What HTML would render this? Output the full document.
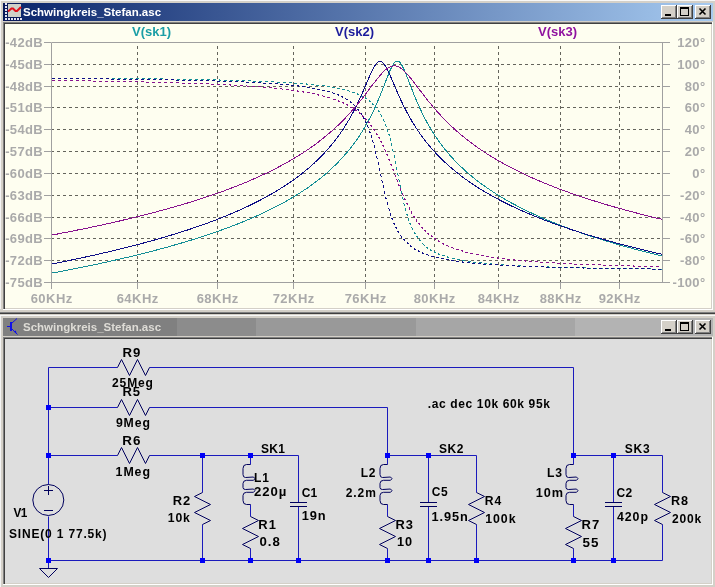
<!DOCTYPE html>
<html><head><meta charset="utf-8"><style>
html,body{margin:0;padding:0;width:715px;height:587px;overflow:hidden;background:#d4d0c8}
svg{display:block}
text{font-family:"Liberation Sans",sans-serif}
.ttl{font-size:11.5px;font-weight:bold}
.ax{font-size:13px;font-weight:bold;fill:#aaaaaa;letter-spacing:0.35px}
.tl{font-size:13px;font-weight:bold}
.sc{font-size:12px;font-weight:bold;fill:#000}
</style></head><body>
<svg width="715" height="587" viewBox="0 0 715 587" style="will-change:transform">
<defs>
<linearGradient id="ga" x1="0" x2="1" y1="0" y2="0"><stop offset="0" stop-color="#0a246a"/><stop offset="1" stop-color="#a6caf0"/></linearGradient>
<linearGradient id="gi" x1="0" x2="1" y1="0" y2="0"><stop offset="0" stop-color="#808080"/><stop offset="1" stop-color="#c0c0c0"/></linearGradient>
<clipPath id="cp"><rect x="51" y="42" width="612" height="241"/></clipPath>
</defs>
<rect x="0" y="0" width="715" height="1" fill="#f8f8f8" />
<rect x="0" y="1" width="1" height="308" fill="#f4f4f4" />
<rect x="3" y="3" width="710" height="18" fill="url(#ga)" />
<text x="23" y="16" class="ttl" fill="#ffffff">Schwingkreis_Stefan.asc</text>
<rect x="3" y="3" width="18" height="18" fill="#0a1a5a"/><rect x="8" y="4" width="13" height="13" fill="#cfd0c8"/><rect x="5" y="3" width="2" height="1" fill="#dde0f0"/><rect x="5" y="3" width="2" height="2" fill="#e4e4f4"/><rect x="5" y="6" width="2" height="2" fill="#e4e4f4"/><rect x="5" y="9" width="2" height="2" fill="#e4e4f4"/><rect x="5" y="12" width="2" height="2" fill="#e4e4f4"/><rect x="5" y="15" width="2" height="2" fill="#e4e4f4"/><rect x="5" y="18" width="2" height="2" fill="#e4e4f4"/><rect x="8" y="18" width="2" height="2" fill="#e4e4f4"/><rect x="11" y="18" width="2" height="2" fill="#e4e4f4"/><rect x="14" y="18" width="2" height="2" fill="#e4e4f4"/><rect x="17" y="18" width="2" height="2" fill="#e4e4f4"/><rect x="20" y="18" width="2" height="2" fill="#e4e4f4"/><path d="M8 11.5L11.5 8.5L13 8.5L15.5 11L17 11L21 7" stroke="#e0101c" stroke-width="2" fill="none"/>
<rect x="661" y="5" width="16" height="14" fill="#404040" />
<rect x="661" y="5" width="15" height="13" fill="#ffffff" />
<rect x="662" y="6" width="14" height="12" fill="#808080" />
<rect x="662" y="6" width="13" height="11" fill="#d4d0c8" />
<rect x="665" y="14" width="6" height="2" fill="#000" />
<rect x="677" y="5" width="16" height="14" fill="#404040" />
<rect x="677" y="5" width="15" height="13" fill="#ffffff" />
<rect x="678" y="6" width="14" height="12" fill="#808080" />
<rect x="678" y="6" width="13" height="11" fill="#d4d0c8" />
<rect x="680" y="7" width="9" height="9" fill="#000" />
<rect x="681" y="9" width="7" height="6" fill="#d4d0c8" />
<rect x="695" y="5" width="16" height="14" fill="#404040" />
<rect x="695" y="5" width="15" height="13" fill="#ffffff" />
<rect x="696" y="6" width="14" height="12" fill="#808080" />
<rect x="696" y="6" width="13" height="11" fill="#d4d0c8" />
<path d="M699.5 8.5L705.5 14.5M705.5 8.5L699.5 14.5" stroke="#000" stroke-width="1.6"/>
<rect x="3" y="22" width="710" height="1" fill="#808080" />
<rect x="3" y="22" width="1" height="288" fill="#808080" />
<rect x="4" y="23" width="708" height="1" fill="#404040" />
<rect x="4" y="23" width="1" height="286" fill="#404040" />
<rect x="3" y="309" width="710" height="1" fill="#ffffff" />
<rect x="712" y="22" width="1" height="288" fill="#ffffff" />
<rect x="5" y="24" width="706" height="284" fill="#fefef0" />
<rect x="0" y="312" width="715" height="1" fill="#808080" />
<rect x="0" y="313" width="715" height="1" fill="#404040" />
<rect x="0" y="315" width="715" height="1" fill="#f8f8f8" />
<rect x="0" y="316" width="1" height="308" fill="#f4f4f4" />
<rect x="3" y="318" width="174" height="18" fill="#808080" />
<rect x="177" y="318" width="79" height="18" fill="#8c8c8c" />
<rect x="256" y="318" width="160" height="18" fill="#999999" />
<rect x="416" y="318" width="159" height="18" fill="#a6a6a6" />
<rect x="575" y="318" width="138" height="18" fill="#b3b3b3" />
<text x="23" y="331" class="ttl" fill="#dedcd6">Schwingkreis_Stefan.asc</text>
<rect x="10" y="322" width="2" height="9" fill="#1010e8"/><path d="M7 326.5H10M12 323L17 318.5M12 329L17.5 334.5" stroke="#1010e8" stroke-width="1" fill="none"/><path d="M13.5 331.5L16.5 333.8L16 330.5Z" fill="#1010e8"/>
<rect x="661" y="320" width="16" height="14" fill="#404040" />
<rect x="661" y="320" width="15" height="13" fill="#ffffff" />
<rect x="662" y="321" width="14" height="12" fill="#808080" />
<rect x="662" y="321" width="13" height="11" fill="#d4d0c8" />
<rect x="665" y="329" width="6" height="2" fill="#000" />
<rect x="677" y="320" width="16" height="14" fill="#404040" />
<rect x="677" y="320" width="15" height="13" fill="#ffffff" />
<rect x="678" y="321" width="14" height="12" fill="#808080" />
<rect x="678" y="321" width="13" height="11" fill="#d4d0c8" />
<rect x="680" y="322" width="9" height="9" fill="#000" />
<rect x="681" y="324" width="7" height="6" fill="#d4d0c8" />
<rect x="695" y="320" width="16" height="14" fill="#404040" />
<rect x="695" y="320" width="15" height="13" fill="#ffffff" />
<rect x="696" y="321" width="14" height="12" fill="#808080" />
<rect x="696" y="321" width="13" height="11" fill="#d4d0c8" />
<path d="M699.5 323.5L705.5 329.5M705.5 323.5L699.5 329.5" stroke="#000" stroke-width="1.6"/>
<rect x="3" y="337" width="710" height="1" fill="#808080" />
<rect x="3" y="337" width="1" height="248" fill="#808080" />
<rect x="4" y="338" width="708" height="1" fill="#404040" />
<rect x="4" y="338" width="1" height="246" fill="#404040" />
<rect x="3" y="584" width="710" height="1" fill="#ffffff" />
<rect x="712" y="337" width="1" height="248" fill="#ffffff" />
<rect x="5" y="339" width="706" height="244" fill="#dedede" />
<g shape-rendering="crispEdges"><line x1="51" y1="64.5" x2="662" y2="64.5" stroke="#64645c" stroke-dasharray="3 3"/>
<line x1="51" y1="86.5" x2="662" y2="86.5" stroke="#64645c" stroke-dasharray="3 3"/>
<line x1="51" y1="107.5" x2="662" y2="107.5" stroke="#64645c" stroke-dasharray="3 3"/>
<line x1="51" y1="129.5" x2="662" y2="129.5" stroke="#64645c" stroke-dasharray="3 3"/>
<line x1="51" y1="151.5" x2="662" y2="151.5" stroke="#64645c" stroke-dasharray="3 3"/>
<line x1="51" y1="173.5" x2="662" y2="173.5" stroke="#64645c" stroke-dasharray="3 3"/>
<line x1="51" y1="195.5" x2="662" y2="195.5" stroke="#64645c" stroke-dasharray="3 3"/>
<line x1="51" y1="217.5" x2="662" y2="217.5" stroke="#64645c" stroke-dasharray="3 3"/>
<line x1="51" y1="238.5" x2="662" y2="238.5" stroke="#64645c" stroke-dasharray="3 3"/>
<line x1="51" y1="260.5" x2="662" y2="260.5" stroke="#64645c" stroke-dasharray="3 3"/>
<line x1="137.5" y1="42" x2="137.5" y2="282" stroke="#64645c" stroke-dasharray="3 3" stroke-dashoffset="2"/>
<line x1="217.5" y1="42" x2="217.5" y2="282" stroke="#64645c" stroke-dasharray="3 3" stroke-dashoffset="2"/>
<line x1="293.5" y1="42" x2="293.5" y2="282" stroke="#64645c" stroke-dasharray="3 3" stroke-dashoffset="2"/>
<line x1="365.5" y1="42" x2="365.5" y2="282" stroke="#64645c" stroke-dasharray="3 3" stroke-dashoffset="2"/>
<line x1="434.5" y1="42" x2="434.5" y2="282" stroke="#64645c" stroke-dasharray="3 3" stroke-dashoffset="2"/>
<line x1="498.5" y1="42" x2="498.5" y2="282" stroke="#64645c" stroke-dasharray="3 3" stroke-dashoffset="2"/>
<line x1="560.5" y1="42" x2="560.5" y2="282" stroke="#64645c" stroke-dasharray="3 3" stroke-dashoffset="2"/>
<line x1="619.5" y1="42" x2="619.5" y2="282" stroke="#64645c" stroke-dasharray="3 3" stroke-dashoffset="2"/></g>
<g clip-path="url(#cp)" shape-rendering="crispEdges"><polyline points="51,273.3 51.9,273.1 52.7,272.9 53.2,272.9 54.1,272.7 54.9,272.5 55.4,272.5 56.2,272.3 56.7,272.2 57.6,272 58.4,271.9 58.9,271.8 59.7,271.6 60.2,271.5 61,271.4 61.5,271.3 62.4,271.1 63.2,271 63.7,270.9 64.5,270.7 65,270.6 65.8,270.5 66.3,270.4 67.2,270.2 68,270 68.5,269.9 69.3,269.8 69.8,269.7 70.7,269.5 71.5,269.3 72,269.3 72.8,269.1 73.3,269 74.1,268.8 74.6,268.7 75.5,268.6 76.3,268.4 76.8,268.3 77.6,268.1 78.1,268 79,267.9 79.8,267.7 80.3,267.6 81.1,267.4 81.6,267.3 82.4,267.1 82.9,267.1 83.8,266.9 84.6,266.7 85.1,266.6 85.9,266.4 86.4,266.3 87.2,266.2 87.7,266.1 88.6,265.9 89.4,265.7 89.9,265.6 90.7,265.4 91.2,265.3 92.1,265.2 92.9,265 93.4,264.9 94.2,264.7 94.7,264.6 95.5,264.4 96,264.3 96.9,264.1 97.7,264 98.2,263.9 99,263.7 99.5,263.6 100.4,263.4 101.2,263.2 101.7,263.1 102.5,262.9 103,262.8 103.8,262.6 104.3,262.5 105.2,262.3 106,262.2 106.5,262.1 107.3,261.9 107.8,261.8 108.6,261.6 109.1,261.5 110,261.3 110.8,261.1 111.3,261 112.1,260.8 112.6,260.7 113.5,260.5 114.3,260.3 114.8,260.2 115.6,260 116.1,259.9 116.9,259.7 117.4,259.6 118.3,259.4 119.1,259.2 119.6,259.1 120.4,258.9 120.9,258.8 121.8,258.6 122.6,258.4 123.1,258.3 123.9,258.1 124.4,258 125.2,257.8 125.7,257.7 126.6,257.5 127.4,257.3 127.9,257.2 128.7,257 129.2,256.9 130.1,256.6 130.9,256.4 131.4,256.3 132.2,256.1 132.7,256 133.5,255.8 134,255.7 134.9,255.5 135.7,255.3 136.2,255.2 137,255 137.5,254.8 138.3,254.6 138.8,254.5 139.7,254.3 140.5,254.1 141,254 141.8,253.8 142.3,253.7 143.2,253.4 144,253.2 144.5,253.1 145.3,252.9 145.8,252.8 146.6,252.6 147.1,252.4 148,252.2 148.8,252 149.3,251.9 150.1,251.7 150.6,251.5 151.5,251.3 152.3,251.1 152.8,251 153.6,250.7 154.1,250.6 154.9,250.4 155.4,250.3 156.3,250.1 157.1,249.8 157.6,249.7 158.4,249.5 158.9,249.4 159.7,249.1 160.2,249 161.1,248.8 161.9,248.5 162.4,248.4 163.2,248.2 163.7,248.1 164.6,247.8 165.4,247.6 165.9,247.5 166.7,247.2 167.2,247.1 168,246.9 168.5,246.7 169.4,246.5 170.2,246.3 170.7,246.1 171.5,245.9 172,245.8 172.9,245.5 173.7,245.3 174.2,245.1 175,244.9 175.5,244.8 176.3,244.5 176.8,244.4 177.7,244.1 178.5,243.9 179,243.8 179.8,243.5 180.3,243.4 181.1,243.1 181.6,243 182.5,242.7 183.3,242.5 183.8,242.3 184.6,242.1 185.1,242 186,241.7 186.8,241.4 187.3,241.3 188.1,241 188.6,240.9 189.4,240.6 189.9,240.5 190.8,240.2 191.6,240 192.1,239.8 192.9,239.6 193.4,239.4 194.3,239.2 195.1,238.9 195.6,238.7 196.4,238.5 196.9,238.3 197.7,238.1 198.2,237.9 199.1,237.6 199.9,237.4 200.4,237.2 201.2,236.9 201.7,236.8 202.5,236.5 203,236.4 203.9,236.1 204.7,235.8 205.2,235.6 206,235.4 206.5,235.2 207.4,234.9 208.2,234.6 208.7,234.5 209.5,234.2 210,234 210.8,233.7 211.3,233.6 212.2,233.3 213,233 213.5,232.9 214.3,232.6 214.8,232.4 215.7,232.1 216.5,231.8 217,231.6 217.8,231.3 218.3,231.2 219.1,230.9 219.6,230.7 220.5,230.4 221.3,230.1 221.8,229.9 222.6,229.6 223.1,229.5 223.9,229.1 224.4,229 225.3,228.7 226.1,228.3 226.6,228.2 227.4,227.9 227.9,227.7 228.8,227.4 229.6,227 230.1,226.9 230.9,226.5 231.4,226.4 232.2,226 232.7,225.9 233.6,225.5 234.4,225.2 234.9,225 235.7,224.7 236.2,224.5 237.1,224.2 237.9,223.8 238.4,223.7 239.2,223.3 239.7,223.1 240.5,222.8 241,222.6 241.9,222.3 242.7,221.9 243.2,221.7 244,221.4 244.5,221.2 245.3,220.8 245.8,220.6 246.7,220.3 247.5,219.9 248,219.7 248.8,219.4 249.3,219.2 250.2,218.8 251,218.4 251.5,218.2 252.3,217.9 252.8,217.7 253.6,217.3 254.1,217.1 255,216.7 255.8,216.3 256.3,216.1 257.1,215.7 257.6,215.5 258.5,215.1 259.3,214.7 259.8,214.5 260.6,214.1 261.1,213.9 261.9,213.5 262.4,213.3 263.3,212.9 264.1,212.5 264.6,212.3 265.4,211.9 265.9,211.7 266.7,211.3 267.2,211.1 268.1,210.6 268.9,210.2 269.4,210 270.2,209.6 270.7,209.3 271.6,208.9 272.4,208.5 272.9,208.2 273.7,207.8 274.2,207.6 275,207.1 275.5,206.9 276.4,206.5 277.2,206 277.7,205.8 278.5,205.3 279,205.1 279.9,204.6 280.7,204.2 281.2,203.9 282,203.4 282.5,203.2 283.3,202.7 283.8,202.5 284.7,202 285.5,201.5 286,201.3 286.8,200.8 287.3,200.5 288.2,200 289,199.5 289.5,199.3 290.3,198.8 290.8,198.5 291.6,198 292.1,197.7 293,197.2 293.8,196.7 294.3,196.4 295.1,195.9 295.6,195.6 296.4,195.1 296.9,194.8 297.8,194.3 298.6,193.7 299.1,193.5 299.9,192.9 300.4,192.6 301.3,192 302.1,191.5 302.6,191.2 303.4,190.6 303.9,190.3 304.7,189.7 305.2,189.4 306.1,188.9 306.9,188.3 307.4,188 308.2,187.3 308.7,187 309.6,186.4 310.4,185.8 310.9,185.5 311.7,184.9 312.2,184.5 313,183.9 313.5,183.6 314.4,182.9 315.2,182.3 315.7,182 316.5,181.3 317,180.9 317.8,180.3 318.3,179.9 319.2,179.2 320,178.6 320.5,178.2 321.3,177.5 321.8,177.1 322.7,176.4 323.5,175.7 324,175.3 324.8,174.6 325.3,174.2 326.1,173.5 326.6,173.1 327.5,172.3 328.3,171.6 328.8,171.2 329.6,170.4 330.1,170 331,169.2 331.8,168.4 332.3,168 333.1,167.1 333.6,166.7 334.4,165.9 334.9,165.5 335.3,165 335.8,164.6 336.6,163.7 337.1,163.3 337.5,162.8 338.4,162 338.8,161.5 339.2,161 339.7,160.6 340.1,160.1 340.6,159.7 341,159.2 341.4,158.7 341.9,158.3 342.3,157.8 342.7,157.3 343.2,156.8 343.6,156.3 344.1,155.8 344.5,155.3 344.9,154.8 345.4,154.3 345.8,153.8 346.2,153.3 346.7,152.8 347.1,152.3 347.5,151.8 348,151.2 348.4,150.7 348.9,150.2 349.3,149.6 349.7,149.1 350.2,148.5 350.6,148 351,147.4 351.5,146.9 351.9,146.3 352.4,145.7 352.8,145.2 353.2,144.6 353.7,144 354.1,143.4 354.5,142.8 355,142.2 355.4,141.6 355.8,141 356.3,140.4 356.7,139.8 357.2,139.1 357.6,138.5 358,137.9 358.5,137.2 358.9,136.6 359.3,135.9 359.8,135.2 360.2,134.6 360.6,133.9 361.1,133.2 361.5,132.5 362,131.8 362.4,131.1 362.8,130.4 363.3,129.7 363.7,129 364.1,128.3 364.6,127.5 365,126.8 365.5,126 365.9,125.3 366.3,124.5 366.8,123.7 367.2,122.9 367.6,122.1 368.1,121.3 368.5,120.5 368.9,119.7 369.4,118.9 369.8,118 370.3,117.2 370.7,116.3 371.1,115.5 371.6,114.6 372,113.7 372.4,112.8 372.9,111.9 373.3,111 373.8,110.1 374.2,109.2 374.6,108.2 375.1,107.3 375.5,106.3 375.9,105.3 376.4,104.4 376.8,103.4 377.2,102.4 377.7,101.4 378.1,100.3 378.6,99.3 379,98.3 379.4,97.2 379.9,96.2 380.3,95.1 380.7,94 381.2,92.9 381.6,91.8 382,90.7 382.5,89.6 382.9,88.5 383.4,87.4 383.8,86.2 384.2,85.1 384.7,84 385.1,82.9 385.5,81.7 386,80.6 386.4,79.5 386.9,78.3 387.3,77.2 387.7,76.1 388.2,75 388.6,73.9 389,72.9 389.5,71.8 389.9,70.8 390.3,69.8 390.8,68.9 391.2,68 391.7,67.1 392.1,66.2 392.5,65.4 393,64.7 393.4,64 393.8,63.4 394.3,62.8 395.2,61.9 396,61.3 396.5,61.1 397.3,61 397.8,61.1 398.6,61.4 399.1,61.7 400,62.5 400.4,63 400.8,63.6 401.3,64.3 401.7,65 402.1,65.7 402.6,66.5 403,67.4 403.4,68.3 403.9,69.2 404.3,70.2 404.8,71.2 405.2,72.2 405.6,73.3 406.1,74.3 406.5,75.4 406.9,76.5 407.4,77.6 407.8,78.7 408.3,79.9 408.7,81 409.1,82.1 409.6,83.3 410,84.4 410.4,85.5 410.9,86.7 411.3,87.8 411.7,88.9 412.2,90 412.6,91.1 413.1,92.2 413.5,93.3 413.9,94.4 414.4,95.5 414.8,96.5 415.2,97.6 415.7,98.6 416.1,99.7 416.6,100.7 417,101.7 417.4,102.7 417.9,103.7 418.3,104.7 418.7,105.7 419.2,106.7 419.6,107.6 420,108.6 420.5,109.5 420.9,110.4 421.4,111.4 421.8,112.3 422.2,113.2 422.7,114 423.1,114.9 423.5,115.8 424,116.7 424.4,117.5 424.8,118.3 425.3,119.2 425.7,120 426.2,120.8 426.6,121.6 427,122.4 427.5,123.2 427.9,124 428.3,124.8 428.8,125.5 429.2,126.3 429.7,127 430.1,127.8 430.5,128.5 431,129.3 431.4,130 431.8,130.7 432.3,131.4 432.7,132.1 433.1,132.8 433.6,133.5 434,134.2 434.5,134.8 434.9,135.5 435.3,136.2 435.8,136.8 436.2,137.5 436.6,138.1 437.1,138.7 437.5,139.4 438,140 438.4,140.6 438.8,141.2 439.3,141.8 439.7,142.4 440.1,143 440.6,143.6 441,144.2 441.4,144.8 441.9,145.4 442.3,146 442.8,146.5 443.2,147.1 443.6,147.6 444.1,148.2 444.5,148.7 444.9,149.3 445.4,149.8 445.8,150.4 446.3,150.9 446.7,151.4 447.1,152 447.6,152.5 448,153 448.4,153.5 448.9,154 449.3,154.5 449.7,155 450.2,155.5 450.6,156 451.1,156.5 451.5,157 451.9,157.5 452.4,157.9 452.8,158.4 453.2,158.9 453.7,159.4 454.5,160.3 455,160.8 455.9,161.7 456.7,162.6 457.2,163 458,163.9 458.5,164.3 458.9,164.8 459.4,165.2 460.2,166 460.7,166.5 461.5,167.3 462,167.7 462.8,168.5 463.3,168.9 464.2,169.7 465,170.5 465.5,170.9 466.3,171.7 466.8,172.1 467.7,172.9 468.5,173.6 469,174 469.8,174.7 470.3,175.1 471.1,175.8 471.6,176.2 472.5,176.9 473.3,177.6 473.8,178 474.6,178.7 475.1,179 475.9,179.7 476.4,180.1 477.3,180.7 478.1,181.4 478.6,181.7 479.4,182.4 479.9,182.7 480.8,183.4 481.6,184 482.1,184.3 482.9,185 483.4,185.3 484.2,185.9 484.7,186.2 485.6,186.8 486.4,187.5 486.9,187.8 487.7,188.4 488.2,188.7 489.1,189.3 489.9,189.8 490.4,190.1 491.2,190.7 491.7,191 492.5,191.6 493,191.9 493.9,192.4 494.7,193 495.2,193.3 496,193.8 496.5,194.1 497.3,194.7 497.8,194.9 498.7,195.5 499.5,196 500,196.3 500.8,196.8 501.3,197.1 502.2,197.6 503,198.1 503.5,198.4 504.3,198.9 504.8,199.1 505.6,199.6 506.1,199.9 507,200.4 507.8,200.9 508.3,201.1 509.1,201.6 509.6,201.9 510.5,202.3 511.3,202.8 511.8,203.1 512.6,203.5 513.1,203.8 513.9,204.2 514.4,204.5 515.3,204.9 516.1,205.4 516.6,205.6 517.4,206.1 517.9,206.3 518.7,206.8 519.2,207 520.1,207.4 520.9,207.9 521.4,208.1 522.2,208.5 522.7,208.8 523.6,209.2 524.4,209.6 524.9,209.9 525.7,210.3 526.2,210.5 527,210.9 527.5,211.1 528.4,211.5 529.2,212 529.7,212.2 530.5,212.6 531,212.8 531.9,213.2 532.7,213.6 533.2,213.8 534,214.2 534.5,214.4 535.3,214.8 535.8,215 536.7,215.4 537.5,215.8 538,216 538.8,216.4 539.3,216.6 540.1,217 540.6,217.2 541.5,217.5 542.3,217.9 542.8,218.1 543.6,218.5 544.1,218.7 545,219 545.8,219.4 546.3,219.6 547.1,220 547.6,220.2 548.4,220.5 548.9,220.7 549.8,221.1 550.6,221.4 551.1,221.6 551.9,222 552.4,222.1 553.3,222.5 554.1,222.8 554.6,223 555.4,223.4 555.9,223.5 556.7,223.9 557.2,224.1 558.1,224.4 558.9,224.8 559.4,224.9 560.2,225.3 560.7,225.4 561.5,225.8 562,225.9 562.9,226.3 563.7,226.6 564.2,226.8 565,227.1 565.5,227.3 566.4,227.6 567.2,227.9 567.7,228.1 568.5,228.4 569,228.6 569.8,228.9 570.3,229 571.2,229.4 572,229.7 572.5,229.8 573.3,230.1 573.8,230.3 574.7,230.6 575.5,230.9 576,231.1 576.8,231.4 577.3,231.5 578.1,231.8 578.6,232 579.5,232.3 580.3,232.6 580.8,232.8 581.6,233.1 582.1,233.2 582.9,233.5 583.4,233.7 584.3,234 585.1,234.2 585.6,234.4 586.4,234.7 586.9,234.8 587.8,235.1 588.6,235.4 589.1,235.6 589.9,235.8 590.4,236 591.2,236.3 591.7,236.4 592.6,236.7 593.4,237 593.9,237.1 594.7,237.4 595.2,237.5 596.1,237.8 596.9,238.1 597.4,238.2 598.2,238.5 598.7,238.7 599.5,238.9 600,239.1 600.9,239.3 601.7,239.6 602.2,239.7 603,240 603.5,240.2 604.4,240.4 605.2,240.7 605.7,240.8 606.5,241.1 607,241.2 607.8,241.5 608.3,241.6 609.2,241.9 610,242.1 610.5,242.3 611.3,242.5 611.8,242.7 612.6,242.9 613.1,243 614,243.3 614.8,243.6 615.3,243.7 616.1,243.9 616.6,244.1 617.5,244.3 618.3,244.6 618.8,244.7 619.6,244.9 620.1,245.1 620.9,245.3 621.4,245.4 622.3,245.7 623.1,245.9 623.6,246.1 624.4,246.3 624.9,246.4 625.8,246.7 626.6,246.9 627.1,247 627.9,247.3 628.4,247.4 629.2,247.6 629.7,247.8 630.6,248 631.4,248.2 631.9,248.3 632.7,248.6 633.2,248.7 634,248.9 634.5,249.1 635.4,249.3 636.2,249.5 636.7,249.6 637.5,249.9 638,250 638.9,250.2 639.7,250.4 640.2,250.6 641,250.8 641.5,250.9 642.3,251.1 642.8,251.2 643.7,251.5 644.5,251.7 645,251.8 645.8,252 646.3,252.1 647.2,252.4 648,252.6 648.5,252.7 649.3,252.9 649.8,253 650.6,253.3 651.1,253.4 652,253.6 652.8,253.8 653.3,253.9 654.1,254.1 654.6,254.2 655.4,254.5 655.9,254.6 656.8,254.8 657.6,255 658.1,255.1 658.9,255.3 659.4,255.4 660.3,255.6 661.1,255.8 661.6,255.9" stroke="#138e96" fill="none" stroke-width="1"/>
<path d="M52 78h3M58 78h3M64 78h3M70 78h3M76 78h3M82 78h3M88 78h3M94 78h3M100 78h3M106 78h3M112 78h3M118 78h3M124 78h3M130 78h3M136 78h3M142 78h3M148 78h3M154 78h3M160 78h3M165 79h3M171 79h3M177 79h3M183 79h3M189 79h3M195 79h3M201 79h3M207 79h3M213 79h3M219 79h1M219 80h2M224 80h3M230 80h3M236 80h3M242 80h3M248 80h3M253 81h3M259 81h3M265 81h3M271 81h3M277 82h3M283 82h3M289 82h3M294 83h3M300 83h3M306 83h1M306 84h2M311 84h3M316 85h3M322 85h3M327 86h3M332 87h3M337 88h3M342 89h3M347 90h2M349 91h1M352 92h3M357 93h1M357 94h2M361 95h1M361 96h2M365 97h1M365 98h2M369 100h1M369 101h2M372 103h1M372 104h2M375 106h1M375 107h2M378 110h1M378 111h2M380 114h1M381 115h1M381 116h1M383 119h1M383 120h1M384 121h1M385 124h1M385 125h1M386 126h1M387 129h1M387 130h1M387 131h1M388 134h2M389 135h1M390 138h1M390 139h1M390 140h1M391 143h1M391 144h1M391 145h1M392 149h1M392 150h1M393 151h1M394 155h1M394 156h1M394 157h1M395 161h1M395 162h1M395 163h1M396 167h1M396 168h1M396 169h1M397 173h1M397 174h1M398 175h1M398 179h1M399 180h1M399 181h1M400 185h1M400 186h1M400 187h1M401 191h1M401 192h1M401 193h1M402 197h1M402 198h1M403 199h1M403 203h1M404 204h1M404 205h1M405 208h1M405 209h1M405 210h1M406 214h2M407 215h1M408 218h1M408 219h1M408 220h1M409 223h2M410 224h1M411 227h1M412 228h1M412 229h1M414 232h1M414 233h2M416 236h2M417 237h1M419 239h1M419 240h2M422 243h1M423 244h1M424 245h1M426 247h2M427 248h1M430 249h1M430 250h2M434 251h1M434 252h2M438 253h1M438 254h2M442 255h3M447 256h1M447 257h2M452 258h3M457 259h3M462 260h3M468 261h3M473 262h3M479 262h3M484 263h3M490 263h2M491 264h1M495 264h3M501 264h3M506 265h3M512 265h3M518 265h3M523 266h3M529 266h3M535 266h3M541 266h3M547 266h2M549 267h1M553 267h3M559 267h3M565 267h3M571 267h3M577 267h3M583 267h3M588 268h3M594 268h3M600 268h3M606 268h3M612 268h3M618 268h3M624 268h3M630 268h3M636 268h3M642 268h3M648 268h3M653 269h3M659 269h3" stroke="#138e96" stroke-width="1" transform="translate(0 0.5)"/>
<polyline points="51,264.2 51.9,264 52.7,263.8 53.2,263.7 54.1,263.6 54.9,263.4 55.4,263.3 56.2,263.1 56.7,263 57.6,262.9 58.4,262.7 58.9,262.6 59.7,262.4 60.2,262.3 61,262.2 61.5,262.1 62.4,261.9 63.2,261.7 63.7,261.6 64.5,261.5 65,261.4 65.8,261.2 66.3,261.1 67.2,260.9 68,260.7 68.5,260.6 69.3,260.5 69.8,260.4 70.7,260.2 71.5,260 72,259.9 72.8,259.7 73.3,259.7 74.1,259.5 74.6,259.4 75.5,259.2 76.3,259 76.8,258.9 77.6,258.7 78.1,258.6 79,258.5 79.8,258.3 80.3,258.2 81.1,258 81.6,257.9 82.4,257.7 82.9,257.6 83.8,257.4 84.6,257.2 85.1,257.1 85.9,256.9 86.4,256.9 87.2,256.7 87.7,256.6 88.6,256.4 89.4,256.2 89.9,256.1 90.7,255.9 91.2,255.8 92.1,255.6 92.9,255.4 93.4,255.3 94.2,255.1 94.7,255 95.5,254.8 96,254.7 96.9,254.5 97.7,254.3 98.2,254.2 99,254 99.5,253.9 100.4,253.7 101.2,253.5 101.7,253.4 102.5,253.2 103,253.1 103.8,252.9 104.3,252.8 105.2,252.6 106,252.4 106.5,252.3 107.3,252.1 107.8,252 108.6,251.8 109.1,251.7 110,251.5 110.8,251.3 111.3,251.2 112.1,251 112.6,250.9 113.5,250.7 114.3,250.5 114.8,250.3 115.6,250.1 116.1,250 116.9,249.8 117.4,249.7 118.3,249.5 119.1,249.3 119.6,249.2 120.4,249 120.9,248.9 121.8,248.6 122.6,248.4 123.1,248.3 123.9,248.1 124.4,248 125.2,247.8 125.7,247.7 126.6,247.4 127.4,247.2 127.9,247.1 128.7,246.9 129.2,246.8 130.1,246.6 130.9,246.3 131.4,246.2 132.2,246 132.7,245.9 133.5,245.7 134,245.6 134.9,245.3 135.7,245.1 136.2,245 137,244.8 137.5,244.6 138.3,244.4 138.8,244.3 139.7,244.1 140.5,243.8 141,243.7 141.8,243.5 142.3,243.4 143.2,243.1 144,242.9 144.5,242.8 145.3,242.5 145.8,242.4 146.6,242.2 147.1,242.1 148,241.8 148.8,241.6 149.3,241.5 150.1,241.2 150.6,241.1 151.5,240.9 152.3,240.6 152.8,240.5 153.6,240.3 154.1,240.1 154.9,239.9 155.4,239.8 156.3,239.5 157.1,239.3 157.6,239.1 158.4,238.9 158.9,238.8 159.7,238.5 160.2,238.4 161.1,238.1 161.9,237.9 162.4,237.8 163.2,237.5 163.7,237.4 164.6,237.1 165.4,236.9 165.9,236.7 166.7,236.5 167.2,236.3 168,236.1 168.5,235.9 169.4,235.7 170.2,235.4 170.7,235.3 171.5,235 172,234.9 172.9,234.6 173.7,234.4 174.2,234.2 175,234 175.5,233.8 176.3,233.5 176.8,233.4 177.7,233.1 178.5,232.9 179,232.7 179.8,232.4 180.3,232.3 181.1,232 181.6,231.9 182.5,231.6 183.3,231.3 183.8,231.2 184.6,230.9 185.1,230.8 186,230.5 186.8,230.2 187.3,230.1 188.1,229.8 188.6,229.6 189.4,229.3 189.9,229.2 190.8,228.9 191.6,228.6 192.1,228.5 192.9,228.2 193.4,228 194.3,227.7 195.1,227.4 195.6,227.3 196.4,227 196.9,226.8 197.7,226.5 198.2,226.4 199.1,226.1 199.9,225.8 200.4,225.6 201.2,225.3 201.7,225.1 202.5,224.8 203,224.7 203.9,224.4 204.7,224 205.2,223.9 206,223.6 206.5,223.4 207.4,223.1 208.2,222.8 208.7,222.6 209.5,222.3 210,222.1 210.8,221.8 211.3,221.6 212.2,221.3 213,221 213.5,220.8 214.3,220.5 214.8,220.3 215.7,220 216.5,219.7 217,219.5 217.8,219.1 218.3,219 219.1,218.6 219.6,218.5 220.5,218.1 221.3,217.8 221.8,217.6 222.6,217.2 223.1,217.1 223.9,216.7 224.4,216.5 225.3,216.2 226.1,215.8 226.6,215.7 227.4,215.3 227.9,215.1 228.8,214.8 229.6,214.4 230.1,214.2 230.9,213.8 231.4,213.7 232.2,213.3 232.7,213.1 233.6,212.7 234.4,212.3 234.9,212.2 235.7,211.8 236.2,211.6 237.1,211.2 237.9,210.8 238.4,210.6 239.2,210.2 239.7,210 240.5,209.6 241,209.4 241.9,209.1 242.7,208.7 243.2,208.5 244,208.1 244.5,207.9 245.3,207.4 245.8,207.2 246.7,206.8 247.5,206.4 248,206.2 248.8,205.8 249.3,205.6 250.2,205.2 251,204.7 251.5,204.5 252.3,204.1 252.8,203.9 253.6,203.5 254.1,203.2 255,202.8 255.8,202.4 256.3,202.1 257.1,201.7 257.6,201.5 258.5,201 259.3,200.6 259.8,200.4 260.6,199.9 261.1,199.7 261.9,199.2 262.4,199 263.3,198.5 264.1,198 264.6,197.8 265.4,197.3 265.9,197.1 266.7,196.6 267.2,196.4 268.1,195.9 268.9,195.4 269.4,195.1 270.2,194.7 270.7,194.4 271.6,193.9 272.4,193.4 272.9,193.1 273.7,192.6 274.2,192.4 275,191.9 275.5,191.6 276.4,191.1 277.2,190.6 277.7,190.3 278.5,189.8 279,189.5 279.9,188.9 280.7,188.4 281.2,188.1 282,187.6 282.5,187.3 283.3,186.7 283.8,186.5 284.7,185.9 285.5,185.3 286,185 286.8,184.5 287.3,184.2 288.2,183.6 289,183 289.5,182.7 290.3,182.1 290.8,181.8 291.6,181.2 292.1,180.9 293,180.3 293.8,179.6 294.3,179.3 295.1,178.7 295.6,178.4 296.4,177.7 296.9,177.4 297.8,176.7 298.6,176.1 299.1,175.8 299.9,175.1 300.4,174.8 301.3,174.1 302.1,173.4 302.6,173 303.4,172.4 303.9,172 304.7,171.3 305.2,170.9 306.1,170.2 306.9,169.5 307.4,169.1 308.2,168.4 308.7,168 309.6,167.3 310.4,166.5 310.9,166.1 311.7,165.3 312.2,164.9 313,164.2 313.5,163.8 314.4,163 315.2,162.1 315.7,161.7 316.5,160.9 317,160.5 317.8,159.6 318.3,159.2 319.2,158.4 319.6,157.9 320.5,157.1 320.9,156.6 321.8,155.7 322.7,154.8 323.1,154.3 324,153.4 324.8,152.5 325.3,152 325.7,151.5 326.6,150.6 327,150.1 327.5,149.6 327.9,149.1 328.3,148.6 328.8,148.1 329.2,147.6 329.6,147.1 330.1,146.6 330.5,146 331,145.5 331.4,145 331.8,144.5 332.3,143.9 332.7,143.4 333.1,142.9 333.6,142.3 334,141.8 334.4,141.2 334.9,140.6 335.3,140.1 335.8,139.5 336.2,138.9 336.6,138.4 337.1,137.8 337.5,137.2 337.9,136.6 338.4,136 338.8,135.4 339.2,134.8 339.7,134.2 340.1,133.5 340.6,132.9 341,132.3 341.4,131.7 341.9,131 342.3,130.4 342.7,129.7 343.2,129.1 343.6,128.4 344.1,127.7 344.5,127 344.9,126.4 345.4,125.7 345.8,125 346.2,124.3 346.7,123.6 347.1,122.8 347.5,122.1 348,121.4 348.4,120.7 348.9,119.9 349.3,119.2 349.7,118.4 350.2,117.6 350.6,116.9 351,116.1 351.5,115.3 351.9,114.5 352.4,113.7 352.8,112.9 353.2,112.1 353.7,111.2 354.1,110.4 354.5,109.5 355,108.7 355.4,107.8 355.8,107 356.3,106.1 356.7,105.2 357.2,104.3 357.6,103.4 358,102.5 358.5,101.6 358.9,100.6 359.3,99.7 359.8,98.8 360.2,97.8 360.6,96.9 361.1,95.9 361.5,94.9 362,93.9 362.4,92.9 362.8,91.9 363.3,90.9 363.7,89.9 364.1,88.9 364.6,87.9 365,86.9 365.5,85.9 365.9,84.8 366.3,83.8 366.8,82.8 367.2,81.7 367.6,80.7 368.1,79.7 368.5,78.7 368.9,77.7 369.4,76.6 369.8,75.7 370.3,74.7 370.7,73.7 371.1,72.7 371.6,71.8 372,70.9 372.4,70 372.9,69.1 373.3,68.3 373.8,67.5 374.2,66.7 374.6,66 375.1,65.3 375.5,64.6 375.9,64 376.4,63.5 376.8,63 377.7,62.2 378.6,61.6 379.4,61.3 379.9,61.3 380.7,61.4 381.2,61.5 382,62 382.5,62.3 383.4,63.2 383.8,63.7 384.2,64.3 384.7,64.9 385.1,65.5 385.5,66.2 386,67 386.4,67.8 386.9,68.6 387.3,69.4 387.7,70.3 388.2,71.2 388.6,72.2 389,73.1 389.5,74.1 389.9,75 390.3,76 390.8,77 391.2,78 391.7,79.1 392.1,80.1 392.5,81.1 393,82.1 393.4,83.2 393.8,84.2 394.3,85.2 394.7,86.3 395.2,87.3 395.6,88.3 396,89.3 396.5,90.3 396.9,91.3 397.3,92.3 397.8,93.3 398.2,94.3 398.6,95.3 399.1,96.3 399.5,97.2 400,98.2 400.4,99.1 400.8,100.1 401.3,101 401.7,101.9 402.1,102.8 402.6,103.8 403,104.7 403.4,105.5 403.9,106.4 404.3,107.3 404.8,108.2 405.2,109 405.6,109.9 406.1,110.7 406.5,111.5 406.9,112.4 407.4,113.2 407.8,114 408.3,114.8 408.7,115.6 409.1,116.4 409.6,117.2 410,117.9 410.4,118.7 410.9,119.4 411.3,120.2 411.7,120.9 412.2,121.7 412.6,122.4 413.1,123.1 413.5,123.8 413.9,124.5 414.4,125.2 414.8,125.9 415.2,126.6 415.7,127.3 416.1,128 416.6,128.6 417,129.3 417.4,130 417.9,130.6 418.3,131.3 418.7,131.9 419.2,132.5 419.6,133.2 420,133.8 420.5,134.4 420.9,135 421.4,135.6 421.8,136.2 422.2,136.8 422.7,137.4 423.1,138 423.5,138.6 424,139.2 424.4,139.7 424.8,140.3 425.3,140.9 425.7,141.4 426.2,142 426.6,142.5 427,143.1 427.5,143.6 427.9,144.1 428.3,144.7 428.8,145.2 429.2,145.7 429.7,146.2 430.1,146.8 430.5,147.3 431,147.8 431.4,148.3 431.8,148.8 432.3,149.3 432.7,149.8 433.1,150.3 433.6,150.8 434.5,151.7 434.9,152.2 435.3,152.7 435.8,153.1 436.2,153.6 436.6,154.1 437.1,154.5 437.5,155 438,155.4 438.4,155.9 439.3,156.8 440.1,157.7 440.6,158.1 441.4,159 441.9,159.4 442.8,160.2 443.2,160.7 444.1,161.5 444.9,162.3 445.4,162.7 446.3,163.5 447.1,164.3 447.6,164.7 448.4,165.5 448.9,165.9 449.7,166.6 450.2,167 451.1,167.8 451.9,168.5 452.4,168.9 453.2,169.6 453.7,170 454.5,170.7 455,171.1 455.9,171.8 456.7,172.5 457.2,172.8 458,173.5 458.5,173.9 459.4,174.5 460.2,175.2 460.7,175.6 461.5,176.2 462,176.5 462.8,177.2 463.3,177.5 464.2,178.2 465,178.8 465.5,179.1 466.3,179.8 466.8,180.1 467.7,180.7 468.5,181.3 469,181.6 469.8,182.2 470.3,182.5 471.1,183.1 471.6,183.4 472.5,184 473.3,184.6 473.8,184.9 474.6,185.4 475.1,185.7 475.9,186.3 476.4,186.6 477.3,187.1 478.1,187.7 478.6,188 479.4,188.5 479.9,188.8 480.8,189.3 481.6,189.9 482.1,190.1 482.9,190.7 483.4,190.9 484.2,191.4 484.7,191.7 485.6,192.2 486.4,192.7 486.9,193 487.7,193.5 488.2,193.7 489.1,194.2 489.9,194.7 490.4,195 491.2,195.5 491.7,195.7 492.5,196.2 493,196.5 493.9,196.9 494.7,197.4 495.2,197.7 496,198.1 496.5,198.4 497.3,198.8 497.8,199.1 498.7,199.5 499.5,200 500,200.2 500.8,200.7 501.3,200.9 502.2,201.3 503,201.8 503.5,202 504.3,202.4 504.8,202.7 505.6,203.1 506.1,203.3 507,203.8 507.8,204.2 508.3,204.4 509.1,204.8 509.6,205 510.5,205.5 511.3,205.9 511.8,206.1 512.6,206.5 513.1,206.7 513.9,207.1 514.4,207.3 515.3,207.7 516.1,208.1 516.6,208.3 517.4,208.7 517.9,208.9 518.7,209.3 519.2,209.5 520.1,209.9 520.9,210.3 521.4,210.5 522.2,210.9 522.7,211.1 523.6,211.5 524.4,211.8 524.9,212 525.7,212.4 526.2,212.6 527,213 527.5,213.2 528.4,213.5 529.2,213.9 529.7,214.1 530.5,214.5 531,214.6 531.9,215 532.7,215.4 533.2,215.5 534,215.9 534.5,216.1 535.3,216.4 535.8,216.6 536.7,217 537.5,217.3 538,217.5 538.8,217.8 539.3,218 540.1,218.4 540.6,218.5 541.5,218.9 542.3,219.2 542.8,219.4 543.6,219.7 544.1,219.9 545,220.2 545.8,220.6 546.3,220.7 547.1,221 547.6,221.2 548.4,221.5 548.9,221.7 549.8,222 550.6,222.4 551.1,222.5 551.9,222.8 552.4,223 553.3,223.3 554.1,223.6 554.6,223.8 555.4,224.1 555.9,224.3 556.7,224.6 557.2,224.7 558.1,225 558.9,225.4 559.4,225.5 560.2,225.8 560.7,226 561.5,226.3 562,226.4 562.9,226.7 563.7,227 564.2,227.2 565,227.5 565.5,227.6 566.4,227.9 567.2,228.2 567.7,228.4 568.5,228.7 569,228.8 569.8,229.1 570.3,229.2 571.2,229.5 572,229.8 572.5,230 573.3,230.3 573.8,230.4 574.7,230.7 575.5,231 576,231.1 576.8,231.4 577.3,231.5 578.1,231.8 578.6,231.9 579.5,232.2 580.3,232.5 580.8,232.6 581.6,232.9 582.1,233.1 582.9,233.3 583.4,233.5 584.3,233.7 585.1,234 585.6,234.1 586.4,234.4 586.9,234.5 587.8,234.8 588.6,235.1 589.1,235.2 589.9,235.5 590.4,235.6 591.2,235.9 591.7,236 592.6,236.3 593.4,236.5 593.9,236.7 594.7,236.9 595.2,237 596.1,237.3 596.9,237.6 597.4,237.7 598.2,237.9 598.7,238.1 599.5,238.3 600,238.4 600.9,238.7 601.7,238.9 602.2,239.1 603,239.3 603.5,239.4 604.4,239.7 605.2,239.9 605.7,240.1 606.5,240.3 607,240.4 607.8,240.7 608.3,240.8 609.2,241 610,241.3 610.5,241.4 611.3,241.6 611.8,241.8 612.6,242 613.1,242.1 614,242.4 614.8,242.6 615.3,242.7 616.1,242.9 616.6,243.1 617.5,243.3 618.3,243.5 618.8,243.6 619.6,243.9 620.1,244 620.9,244.2 621.4,244.3 622.3,244.6 623.1,244.8 623.6,244.9 624.4,245.1 624.9,245.3 625.8,245.5 626.6,245.7 627.1,245.8 627.9,246 628.4,246.2 629.2,246.4 629.7,246.5 630.6,246.7 631.4,246.9 631.9,247.1 632.7,247.3 633.2,247.4 634,247.6 634.5,247.7 635.4,247.9 636.2,248.1 636.7,248.3 637.5,248.5 638,248.6 638.9,248.8 639.7,249 640.2,249.1 641,249.3 641.5,249.4 642.3,249.7 642.8,249.8 643.7,250 644.5,250.2 645,250.3 645.8,250.5 646.3,250.6 647.2,250.8 648,251 648.5,251.1 649.3,251.3 649.8,251.4 650.6,251.6 651.1,251.7 652,251.9 652.8,252.2 653.3,252.3 654.1,252.5 654.6,252.6 655.4,252.8 655.9,252.9 656.8,253.1 657.6,253.3 658.1,253.4 658.9,253.6 659.4,253.7 660.3,253.9 661.1,254.1 661.6,254.2" stroke="#0e0e86" fill="none" stroke-width="1"/>
<path d="M52 78h3M58 78h3M64 78h3M70 78h3M76 78h3M82 78h3M88 78h3M94 78h3M100 78h3M106 78h3M111 79h3M117 79h3M123 79h3M129 79h3M135 79h3M141 79h3M147 79h3M153 79h3M159 79h3M165 79h3M171 79h3M176 80h3M182 80h3M188 80h3M194 80h3M200 80h3M206 80h3M212 80h3M217 81h3M223 81h3M229 81h3M235 81h3M241 81h3M246 82h3M252 82h3M258 82h3M263 83h3M269 83h3M275 83h3M280 84h3M286 84h3M291 85h3M297 85h2M298 86h1M302 86h3M307 87h3M312 88h3M317 89h3M322 90h3M327 91h3M332 92h1M333 93h2M337 94h2M338 95h1M341 96h2M342 97h1M345 98h1M346 99h2M350 101h1M350 102h2M353 104h1M354 105h1M355 106h1M357 109h2M358 110h1M360 113h2M361 114h1M363 117h1M363 118h2M365 121h1M365 122h2M367 125h1M367 126h1M368 127h1M369 131h1M369 132h2M371 135h1M371 136h1M371 137h1M372 140h1M372 141h1M373 142h1M374 145h1M374 146h1M374 147h1M375 151h1M375 152h1M375 153h1M376 156h1M376 157h1M377 158h1M378 162h1M378 163h1M378 164h1M379 168h1M379 169h1M379 170h1M380 174h1M380 175h1M381 176h1M381 180h1M382 181h1M382 182h1M383 185h1M383 186h1M383 187h1M384 191h1M384 192h1M384 193h1M385 197h1M385 198h2M387 202h1M387 203h1M387 204h1M388 208h1M389 209h1M389 210h1M390 213h1M390 214h1M390 215h1M391 218h2M392 219h1M393 223h2M394 224h1M395 227h2M396 228h1M397 231h2M398 232h1M400 235h1M401 236h1M401 237h1M403 239h2M404 240h1M407 242h1M407 243h2M410 245h1M410 246h2M414 248h1M414 249h2M418 250h1M418 251h2M422 252h1M422 253h2M426 254h2M428 255h1M431 256h3M436 257h3M441 258h3M446 259h3M451 260h3M456 261h3M462 261h1M462 262h2M467 262h3M472 263h3M478 263h3M483 264h3M489 264h3M495 264h3M500 265h3M506 265h3M512 265h3M517 266h3M523 266h3M529 266h3M535 266h3M541 266h3M546 267h3M552 267h3M558 267h3M564 267h3M570 267h3M576 267h3M582 267h2M583 268h1M587 268h3M593 268h3M599 268h3M605 268h3M611 268h3M617 268h3M623 268h3M629 268h3M635 268h3M641 268h3M647 268h3M652 269h3M658 269h3" stroke="#0e0e86" stroke-width="1" transform="translate(0 0.5)"/>
<polyline points="51,235.2 51.9,235 52.7,234.9 53.2,234.8 54.1,234.6 54.9,234.5 55.4,234.4 56.2,234.2 56.7,234.1 57.6,234 58.4,233.8 58.9,233.7 59.7,233.5 60.2,233.5 61,233.3 61.5,233.2 62.4,233 63.2,232.9 63.7,232.8 64.5,232.6 65,232.5 65.8,232.4 66.3,232.3 67.2,232.1 68,231.9 68.5,231.9 69.3,231.7 69.8,231.6 70.7,231.4 71.5,231.2 72,231.2 72.8,231 73.3,230.9 74.1,230.7 74.6,230.6 75.5,230.5 76.3,230.3 76.8,230.2 77.6,230 78.1,229.9 79,229.8 79.8,229.6 80.3,229.5 81.1,229.3 81.6,229.2 82.4,229 82.9,229 83.8,228.8 84.6,228.6 85.1,228.5 85.9,228.3 86.4,228.2 87.2,228.1 87.7,228 88.6,227.8 89.4,227.6 89.9,227.5 90.7,227.3 91.2,227.2 92.1,227 92.9,226.9 93.4,226.8 94.2,226.6 94.7,226.5 95.5,226.3 96,226.2 96.9,226 97.7,225.8 98.2,225.7 99,225.6 99.5,225.5 100.4,225.3 101.2,225.1 101.7,225 102.5,224.8 103,224.7 103.8,224.5 104.3,224.4 105.2,224.2 106,224 106.5,223.9 107.3,223.7 107.8,223.6 108.6,223.4 109.1,223.3 110,223.1 110.8,223 111.3,222.9 112.1,222.7 112.6,222.6 113.5,222.4 114.3,222.2 114.8,222.1 115.6,221.9 116.1,221.8 116.9,221.6 117.4,221.5 118.3,221.3 119.1,221.1 119.6,221 120.4,220.8 120.9,220.7 121.8,220.5 122.6,220.2 123.1,220.1 123.9,219.9 124.4,219.8 125.2,219.6 125.7,219.5 126.6,219.3 127.4,219.1 127.9,219 128.7,218.8 129.2,218.7 130.1,218.5 130.9,218.3 131.4,218.2 132.2,218 132.7,217.9 133.5,217.6 134,217.5 134.9,217.3 135.7,217.1 136.2,217 137,216.8 137.5,216.7 138.3,216.5 138.8,216.4 139.7,216.1 140.5,215.9 141,215.8 141.8,215.6 142.3,215.5 143.2,215.3 144,215 144.5,214.9 145.3,214.7 145.8,214.6 146.6,214.4 147.1,214.3 148,214 148.8,213.8 149.3,213.7 150.1,213.5 150.6,213.4 151.5,213.1 152.3,212.9 152.8,212.8 153.6,212.6 154.1,212.4 154.9,212.2 155.4,212.1 156.3,211.9 157.1,211.6 157.6,211.5 158.4,211.3 158.9,211.2 159.7,210.9 160.2,210.8 161.1,210.6 161.9,210.3 162.4,210.2 163.2,210 163.7,209.9 164.6,209.6 165.4,209.4 165.9,209.3 166.7,209 167.2,208.9 168,208.7 168.5,208.5 169.4,208.3 170.2,208 170.7,207.9 171.5,207.7 172,207.6 172.9,207.3 173.7,207.1 174.2,206.9 175,206.7 175.5,206.6 176.3,206.3 176.8,206.2 177.7,205.9 178.5,205.7 179,205.5 179.8,205.3 180.3,205.2 181.1,204.9 181.6,204.8 182.5,204.5 183.3,204.3 183.8,204.1 184.6,203.9 185.1,203.7 186,203.5 186.8,203.2 187.3,203.1 188.1,202.8 188.6,202.7 189.4,202.4 189.9,202.3 190.8,202 191.6,201.7 192.1,201.6 192.9,201.3 193.4,201.2 194.3,200.9 195.1,200.6 195.6,200.5 196.4,200.2 196.9,200.1 197.7,199.8 198.2,199.7 199.1,199.4 199.9,199.1 200.4,199 201.2,198.7 201.7,198.5 202.5,198.3 203,198.1 203.9,197.8 204.7,197.5 205.2,197.4 206,197.1 206.5,197 207.4,196.7 208.2,196.4 208.7,196.2 209.5,195.9 210,195.8 210.8,195.5 211.3,195.3 212.2,195 213,194.7 213.5,194.6 214.3,194.3 214.8,194.1 215.7,193.8 216.5,193.5 217,193.4 217.8,193.1 218.3,192.9 219.1,192.6 219.6,192.4 220.5,192.1 221.3,191.8 221.8,191.7 222.6,191.3 223.1,191.2 223.9,190.9 224.4,190.7 225.3,190.4 226.1,190.1 226.6,189.9 227.4,189.6 227.9,189.4 228.8,189.1 229.6,188.7 230.1,188.6 230.9,188.2 231.4,188.1 232.2,187.7 232.7,187.6 233.6,187.2 234.4,186.9 234.9,186.7 235.7,186.4 236.2,186.2 237.1,185.9 237.9,185.5 238.4,185.4 239.2,185 239.7,184.8 240.5,184.5 241,184.3 241.9,184 242.7,183.6 243.2,183.4 244,183.1 244.5,182.9 245.3,182.5 245.8,182.3 246.7,182 247.5,181.6 248,181.4 248.8,181.1 249.3,180.9 250.2,180.5 251,180.1 251.5,179.9 252.3,179.5 252.8,179.4 253.6,179 254.1,178.8 255,178.4 255.8,178 256.3,177.8 257.1,177.4 257.6,177.2 258.5,176.8 259.3,176.4 259.8,176.2 260.6,175.8 261.1,175.6 261.9,175.2 262.4,175 263.3,174.6 264.1,174.2 264.6,174 265.4,173.6 265.9,173.4 266.7,173 267.2,172.8 268.1,172.3 268.9,171.9 269.4,171.7 270.2,171.3 270.7,171.1 271.6,170.6 272.4,170.2 272.9,170 273.7,169.5 274.2,169.3 275,168.9 275.5,168.6 276.4,168.2 277.2,167.7 277.7,167.5 278.5,167 279,166.8 279.9,166.4 280.7,165.9 281.2,165.7 282,165.2 282.5,164.9 283.3,164.5 283.8,164.2 284.7,163.8 285.5,163.3 286,163 286.8,162.5 287.3,162.3 288.2,161.8 289,161.3 289.5,161 290.3,160.5 290.8,160.3 291.6,159.8 292.1,159.5 293,159 293.8,158.5 294.3,158.2 295.1,157.7 295.6,157.4 296.4,156.9 296.9,156.6 297.8,156.1 298.6,155.6 299.1,155.3 299.9,154.7 300.4,154.5 301.3,153.9 302.1,153.3 302.6,153.1 303.4,152.5 303.9,152.2 304.7,151.6 305.2,151.3 306.1,150.8 306.9,150.2 307.4,149.9 308.2,149.3 308.7,149 309.6,148.4 310.4,147.8 310.9,147.5 311.7,146.9 312.2,146.6 313,145.9 313.5,145.6 314.4,145 315.2,144.3 315.7,144 316.5,143.4 317,143 317.8,142.4 318.3,142.1 319.2,141.4 320,140.7 320.5,140.4 321.3,139.7 321.8,139.4 322.7,138.7 323.5,138 324,137.6 324.8,136.9 325.3,136.6 326.1,135.8 326.6,135.5 327.5,134.7 328.3,134 328.8,133.6 329.6,132.9 330.1,132.5 331,131.7 331.8,131 332.3,130.6 333.1,129.8 333.6,129.4 334.4,128.6 334.9,128.2 335.8,127.4 336.6,126.6 337.1,126.2 337.9,125.4 338.4,125 338.8,124.5 339.7,123.7 340.6,122.8 341.4,122 341.9,121.5 342.7,120.7 343.2,120.2 344.1,119.3 344.9,118.4 345.4,118 345.8,117.5 346.2,117 346.7,116.6 347.1,116.1 347.5,115.6 348,115.2 348.4,114.7 348.9,114.2 349.7,113.3 350.2,112.8 350.6,112.3 351,111.8 351.5,111.3 351.9,110.8 352.4,110.3 352.8,109.8 353.2,109.3 353.7,108.8 354.1,108.3 354.5,107.8 355,107.3 355.4,106.8 355.8,106.3 356.3,105.7 356.7,105.2 357.2,104.7 357.6,104.2 358,103.6 358.5,103.1 358.9,102.6 359.3,102 359.8,101.5 360.2,100.9 360.6,100.4 361.1,99.9 361.5,99.3 362,98.7 362.4,98.2 362.8,97.6 363.3,97.1 363.7,96.5 364.1,96 364.6,95.4 365,94.8 365.5,94.3 365.9,93.7 366.3,93.1 366.8,92.5 367.2,92 367.6,91.4 368.1,90.8 368.5,90.2 368.9,89.7 369.4,89.1 369.8,88.5 370.3,87.9 370.7,87.4 371.1,86.8 371.6,86.2 372,85.6 372.4,85 372.9,84.5 373.3,83.9 373.8,83.3 374.2,82.7 374.6,82.2 375.1,81.6 375.5,81 375.9,80.5 376.4,79.9 376.8,79.4 377.2,78.8 377.7,78.3 378.1,77.7 378.6,77.2 379,76.7 379.4,76.2 379.9,75.6 380.3,75.1 380.7,74.6 381.2,74.1 382,73.2 382.5,72.7 383.4,71.8 384.2,71 384.7,70.6 385.5,69.8 386,69.4 386.9,68.8 387.7,68.1 388.2,67.9 389,67.3 389.5,67.1 390.3,66.7 390.8,66.5 391.7,66.2 392.5,66 393,66 393.8,65.9 394.3,65.9 395.2,65.9 396,66.1 396.5,66.2 397.3,66.4 397.8,66.6 398.6,67 399.1,67.2 400,67.7 400.8,68.2 401.3,68.5 402.1,69.2 402.6,69.5 403.4,70.3 403.9,70.7 404.8,71.5 405.2,72 406.1,72.9 406.9,73.8 407.4,74.3 407.8,74.8 408.3,75.3 408.7,75.8 409.1,76.3 409.6,76.8 410,77.4 410.4,77.9 410.9,78.4 411.3,79 411.7,79.5 412.2,80.1 412.6,80.7 413.1,81.2 413.5,81.8 413.9,82.3 414.4,82.9 414.8,83.5 415.2,84.1 415.7,84.6 416.1,85.2 416.6,85.8 417,86.4 417.4,86.9 417.9,87.5 418.3,88.1 418.7,88.7 419.2,89.3 419.6,89.8 420,90.4 420.5,91 420.9,91.6 421.4,92.1 421.8,92.7 422.2,93.3 422.7,93.9 423.1,94.4 423.5,95 424,95.6 424.4,96.1 424.8,96.7 425.3,97.2 425.7,97.8 426.2,98.4 426.6,98.9 427,99.5 427.5,100 427.9,100.6 428.3,101.1 428.8,101.6 429.2,102.2 429.7,102.7 430.1,103.3 430.5,103.8 431,104.3 431.4,104.9 431.8,105.4 432.3,105.9 432.7,106.4 433.1,106.9 433.6,107.4 434,108 434.5,108.5 434.9,109 435.3,109.5 435.8,110 436.2,110.5 436.6,111 437.1,111.5 437.5,112 438,112.4 438.4,112.9 438.8,113.4 439.3,113.9 439.7,114.4 440.6,115.3 441,115.8 441.4,116.3 441.9,116.7 442.3,117.2 442.8,117.6 443.2,118.1 443.6,118.6 444.1,119 444.5,119.5 445.4,120.3 445.8,120.8 446.3,121.2 446.7,121.7 447.6,122.5 448,123 448.9,123.8 449.7,124.7 450.2,125.1 451.1,125.9 451.9,126.7 452.4,127.1 453.2,127.9 453.7,128.3 454.5,129.1 455,129.5 455.9,130.3 456.7,131.1 457.2,131.5 458,132.2 458.5,132.6 459.4,133.4 460.2,134.1 460.7,134.5 461.5,135.2 462,135.6 462.8,136.3 463.3,136.7 464.2,137.4 465,138.1 465.5,138.4 466.3,139.1 466.8,139.5 467.7,140.1 468.5,140.8 469,141.2 469.8,141.8 470.3,142.2 471.1,142.8 471.6,143.1 472.5,143.8 473.3,144.4 473.8,144.8 474.6,145.4 475.1,145.7 475.9,146.3 476.4,146.6 477.3,147.3 478.1,147.9 478.6,148.2 479.4,148.8 479.9,149.1 480.8,149.7 481.6,150.3 482.1,150.6 482.9,151.1 483.4,151.4 484.2,152 484.7,152.3 485.6,152.9 486.4,153.4 486.9,153.7 487.7,154.3 488.2,154.5 489.1,155.1 489.9,155.6 490.4,155.9 491.2,156.5 491.7,156.7 492.5,157.3 493,157.5 493.9,158 494.7,158.6 495.2,158.8 496,159.3 496.5,159.6 497.3,160.1 497.8,160.4 498.7,160.9 499.5,161.4 500,161.6 500.8,162.1 501.3,162.4 502.2,162.9 503,163.3 503.5,163.6 504.3,164.1 504.8,164.3 505.6,164.8 506.1,165 507,165.5 507.8,166 508.3,166.2 509.1,166.7 509.6,166.9 510.5,167.3 511.3,167.8 511.8,168 512.6,168.5 513.1,168.7 513.9,169.1 514.4,169.4 515.3,169.8 516.1,170.2 516.6,170.5 517.4,170.9 517.9,171.1 518.7,171.5 519.2,171.8 520.1,172.2 520.9,172.6 521.4,172.8 522.2,173.2 522.7,173.4 523.6,173.9 524.4,174.3 524.9,174.5 525.7,174.9 526.2,175.1 527,175.5 527.5,175.7 528.4,176.1 529.2,176.5 529.7,176.7 530.5,177.1 531,177.3 531.9,177.7 532.7,178.1 533.2,178.3 534,178.7 534.5,178.8 535.3,179.2 535.8,179.4 536.7,179.8 537.5,180.2 538,180.4 538.8,180.7 539.3,180.9 540.1,181.3 540.6,181.5 541.5,181.8 542.3,182.2 542.8,182.4 543.6,182.8 544.1,182.9 545,183.3 545.8,183.7 546.3,183.8 547.1,184.2 547.6,184.4 548.4,184.7 548.9,184.9 549.8,185.2 550.6,185.6 551.1,185.8 551.9,186.1 552.4,186.3 553.3,186.6 554.1,187 554.6,187.1 555.4,187.5 555.9,187.6 556.7,188 557.2,188.1 558.1,188.5 558.9,188.8 559.4,189 560.2,189.3 560.7,189.5 561.5,189.8 562,189.9 562.9,190.3 563.7,190.6 564.2,190.7 565,191.1 565.5,191.2 566.4,191.5 567.2,191.9 567.7,192 568.5,192.3 569,192.5 569.8,192.8 570.3,193 571.2,193.3 572,193.6 572.5,193.7 573.3,194 573.8,194.2 574.7,194.5 575.5,194.8 576,194.9 576.8,195.2 577.3,195.4 578.1,195.7 578.6,195.8 579.5,196.1 580.3,196.4 580.8,196.6 581.6,196.9 582.1,197 582.9,197.3 583.4,197.4 584.3,197.7 585.1,198 585.6,198.2 586.4,198.4 586.9,198.6 587.8,198.9 588.6,199.1 589.1,199.3 589.9,199.6 590.4,199.7 591.2,200 591.7,200.1 592.6,200.4 593.4,200.7 593.9,200.8 594.7,201.1 595.2,201.2 596.1,201.5 596.9,201.8 597.4,201.9 598.2,202.2 598.7,202.3 599.5,202.6 600,202.7 600.9,203 601.7,203.2 602.2,203.4 603,203.6 603.5,203.8 604.4,204 605.2,204.3 605.7,204.4 606.5,204.7 607,204.8 607.8,205.1 608.3,205.2 609.2,205.5 610,205.7 610.5,205.8 611.3,206.1 611.8,206.2 612.6,206.5 613.1,206.6 614,206.8 614.8,207.1 615.3,207.2 616.1,207.5 616.6,207.6 617.5,207.8 618.3,208.1 618.8,208.2 619.6,208.5 620.1,208.6 620.9,208.8 621.4,208.9 622.3,209.2 623.1,209.4 623.6,209.5 624.4,209.8 624.9,209.9 625.8,210.1 626.6,210.4 627.1,210.5 627.9,210.7 628.4,210.9 629.2,211.1 629.7,211.2 630.6,211.4 631.4,211.7 631.9,211.8 632.7,212 633.2,212.1 634,212.4 634.5,212.5 635.4,212.7 636.2,212.9 636.7,213.1 637.5,213.3 638,213.4 638.9,213.6 639.7,213.8 640.2,214 641,214.2 641.5,214.3 642.3,214.5 642.8,214.6 643.7,214.9 644.5,215.1 645,215.2 645.8,215.4 646.3,215.5 647.2,215.7 648,216 648.5,216.1 649.3,216.3 649.8,216.4 650.6,216.6 651.1,216.7 652,216.9 652.8,217.1 653.3,217.3 654.1,217.5 654.6,217.6 655.4,217.8 655.9,217.9 656.8,218.1 657.6,218.3 658.1,218.4 658.9,218.6 659.4,218.7 660.3,218.9 661.1,219.1 661.6,219.3" stroke="#88128e" fill="none" stroke-width="1"/>
<path d="M52 80h3M58 80h3M64 80h3M70 80h3M76 80h3M82 80h3M88 80h3M93 81h3M99 81h3M105 81h3M111 81h3M117 81h3M123 81h3M129 81h3M135 81h3M141 81h3M146 82h3M152 82h3M158 82h3M164 82h3M170 82h3M176 82h3M182 83h3M188 83h3M194 83h3M200 83h3M206 83h3M211 84h3M217 84h3M223 84h3M229 84h2M230 85h1M234 85h3M240 85h3M246 85h1M247 86h2M252 86h3M258 86h3M263 87h3M269 87h3M274 88h3M280 88h2M282 89h1M286 89h3M291 90h3M297 90h1M297 91h2M302 91h2M303 92h1M307 92h3M312 93h3M317 94h2M318 95h1M322 95h1M323 96h2M327 97h3M333 99h3M338 100h1M338 101h2M342 102h2M343 103h1M346 104h2M347 105h1M350 107h3M355 109h1M355 110h2M359 112h1M359 113h2M362 115h1M362 116h2M365 118h1M365 119h2M368 121h1M368 122h2M370 125h2M371 126h1M373 129h2M374 130h1M376 133h1M376 134h2M378 137h2M379 138h1M380 141h2M381 142h1M382 145h2M383 146h1M384 149h1M385 150h1M385 151h1M386 154h2M387 155h1M388 159h2M389 160h1M390 164h2M391 165h1M392 169h2M393 170h1M394 174h1M395 175h1M395 176h1M396 179h1M397 180h1M397 181h1M398 184h1M398 185h2M400 188h1M400 189h1M400 190h1M402 193h1M402 194h1M403 195h1M404 198h1M404 199h2M406 203h2M407 204h1M409 207h1M409 208h1M409 209h1M411 211h1M411 212h1M411 213h1M413 216h2M414 217h1M416 219h1M416 220h1M416 221h1M418 223h2M419 224h1M421 227h2M422 228h1M424 230h2M425 231h1M427 233h2M428 234h1M431 235h1M431 236h2M434 238h2M435 239h1M438 240h1M438 241h2M442 243h2M443 244h1M446 245h2M448 246h1M451 247h2M453 248h1M456 249h3M461 250h2M462 251h1M465 252h3M470 253h3M476 254h3M481 255h3M486 256h3M491 257h3M497 257h1M497 258h2M502 258h3M507 259h3M513 259h2M514 260h1M518 260h3M524 260h2M525 261h1M529 261h3M535 261h3M540 262h3M546 262h3M552 262h3M557 263h3M563 263h3M569 263h3M574 264h3M580 264h3M586 264h3M592 264h3M598 264h3M603 265h3M609 265h3M615 265h3M621 265h3M627 265h3M633 265h1M633 266h2M638 266h3M644 266h3M650 266h3M656 266h3" stroke="#88128e" stroke-width="1" transform="translate(0 0.5)"/></g>
<g><path d="M51.5 42.5H662.5V282.5H51.5Z" stroke="#a0a0a0" fill="none"/>
<line x1="44" y1="42.5" x2="51" y2="42.5" stroke="#a0a0a0"/>
<line x1="662" y1="42.5" x2="670" y2="42.5" stroke="#a0a0a0"/>
<text x="43" y="47" class="ax" text-anchor="end">-42dB</text>
<text x="705.5" y="47" class="ax" text-anchor="end">120°</text>
<line x1="44" y1="64.5" x2="51" y2="64.5" stroke="#a0a0a0"/>
<line x1="662" y1="64.5" x2="670" y2="64.5" stroke="#a0a0a0"/>
<text x="43" y="69" class="ax" text-anchor="end">-45dB</text>
<text x="705.5" y="69" class="ax" text-anchor="end">100°</text>
<line x1="44" y1="86.5" x2="51" y2="86.5" stroke="#a0a0a0"/>
<line x1="662" y1="86.5" x2="670" y2="86.5" stroke="#a0a0a0"/>
<text x="43" y="91" class="ax" text-anchor="end">-48dB</text>
<text x="705.5" y="91" class="ax" text-anchor="end">80°</text>
<line x1="44" y1="107.5" x2="51" y2="107.5" stroke="#a0a0a0"/>
<line x1="662" y1="107.5" x2="670" y2="107.5" stroke="#a0a0a0"/>
<text x="43" y="112" class="ax" text-anchor="end">-51dB</text>
<text x="705.5" y="112" class="ax" text-anchor="end">60°</text>
<line x1="44" y1="129.5" x2="51" y2="129.5" stroke="#a0a0a0"/>
<line x1="662" y1="129.5" x2="670" y2="129.5" stroke="#a0a0a0"/>
<text x="43" y="134" class="ax" text-anchor="end">-54dB</text>
<text x="705.5" y="134" class="ax" text-anchor="end">40°</text>
<line x1="44" y1="151.5" x2="51" y2="151.5" stroke="#a0a0a0"/>
<line x1="662" y1="151.5" x2="670" y2="151.5" stroke="#a0a0a0"/>
<text x="43" y="156" class="ax" text-anchor="end">-57dB</text>
<text x="705.5" y="156" class="ax" text-anchor="end">20°</text>
<line x1="44" y1="173.5" x2="51" y2="173.5" stroke="#a0a0a0"/>
<line x1="662" y1="173.5" x2="670" y2="173.5" stroke="#a0a0a0"/>
<text x="43" y="178" class="ax" text-anchor="end">-60dB</text>
<text x="705.5" y="178" class="ax" text-anchor="end">0°</text>
<line x1="44" y1="195.5" x2="51" y2="195.5" stroke="#a0a0a0"/>
<line x1="662" y1="195.5" x2="670" y2="195.5" stroke="#a0a0a0"/>
<text x="43" y="200" class="ax" text-anchor="end">-63dB</text>
<text x="705.5" y="200" class="ax" text-anchor="end">-20°</text>
<line x1="44" y1="217.5" x2="51" y2="217.5" stroke="#a0a0a0"/>
<line x1="662" y1="217.5" x2="670" y2="217.5" stroke="#a0a0a0"/>
<text x="43" y="222" class="ax" text-anchor="end">-66dB</text>
<text x="705.5" y="222" class="ax" text-anchor="end">-40°</text>
<line x1="44" y1="238.5" x2="51" y2="238.5" stroke="#a0a0a0"/>
<line x1="662" y1="238.5" x2="670" y2="238.5" stroke="#a0a0a0"/>
<text x="43" y="243" class="ax" text-anchor="end">-69dB</text>
<text x="705.5" y="243" class="ax" text-anchor="end">-60°</text>
<line x1="44" y1="260.5" x2="51" y2="260.5" stroke="#a0a0a0"/>
<line x1="662" y1="260.5" x2="670" y2="260.5" stroke="#a0a0a0"/>
<text x="43" y="265" class="ax" text-anchor="end">-72dB</text>
<text x="705.5" y="265" class="ax" text-anchor="end">-80°</text>
<line x1="44" y1="282.5" x2="51" y2="282.5" stroke="#a0a0a0"/>
<line x1="662" y1="282.5" x2="670" y2="282.5" stroke="#a0a0a0"/>
<text x="43" y="287" class="ax" text-anchor="end">-75dB</text>
<text x="705.5" y="287" class="ax" text-anchor="end">-100°</text>
<line x1="51.5" y1="282" x2="51.5" y2="289" stroke="#a0a0a0"/>
<text x="51.75" y="303" class="ax" style="letter-spacing:0.5px" text-anchor="middle">60KHz</text>
<line x1="137.5" y1="282" x2="137.5" y2="289" stroke="#a0a0a0"/>
<text x="137.75" y="303" class="ax" style="letter-spacing:0.5px" text-anchor="middle">64KHz</text>
<line x1="217.5" y1="282" x2="217.5" y2="289" stroke="#a0a0a0"/>
<text x="217.75" y="303" class="ax" style="letter-spacing:0.5px" text-anchor="middle">68KHz</text>
<line x1="293.5" y1="282" x2="293.5" y2="289" stroke="#a0a0a0"/>
<text x="293.75" y="303" class="ax" style="letter-spacing:0.5px" text-anchor="middle">72KHz</text>
<line x1="365.5" y1="282" x2="365.5" y2="289" stroke="#a0a0a0"/>
<text x="365.75" y="303" class="ax" style="letter-spacing:0.5px" text-anchor="middle">76KHz</text>
<line x1="434.5" y1="282" x2="434.5" y2="289" stroke="#a0a0a0"/>
<text x="434.75" y="303" class="ax" style="letter-spacing:0.5px" text-anchor="middle">80KHz</text>
<line x1="498.5" y1="282" x2="498.5" y2="289" stroke="#a0a0a0"/>
<text x="498.75" y="303" class="ax" style="letter-spacing:0.5px" text-anchor="middle">84KHz</text>
<line x1="560.5" y1="282" x2="560.5" y2="289" stroke="#a0a0a0"/>
<text x="560.75" y="303" class="ax" style="letter-spacing:0.5px" text-anchor="middle">88KHz</text>
<line x1="619.5" y1="282" x2="619.5" y2="289" stroke="#a0a0a0"/>
<text x="619.75" y="303" class="ax" style="letter-spacing:0.5px" text-anchor="middle">92KHz</text>
<text x="151.5" y="36" class="tl" fill="#1a9ea6" text-anchor="middle">V(sk1)</text>
<text x="354.5" y="36" class="tl" fill="#1c1c9c" text-anchor="middle">V(sk2)</text>
<text x="557.5" y="36" class="tl" fill="#9012a0" text-anchor="middle">V(sk3)</text></g>
<g><path d="M117.5 367.5 L48.5 367.5 L48.5 484.5" stroke="#1a1abc" fill="none"/>
<path d="M149.5 367.5 L573.5 367.5 L573.5 464.5" stroke="#1a1abc" fill="none"/>
<path d="M48.5 407.5 L117.5 407.5" stroke="#1a1abc" fill="none"/>
<path d="M149.5 407.5 L387.5 407.5 L387.5 464.5" stroke="#1a1abc" fill="none"/>
<path d="M48.5 455.5 L117.5 455.5" stroke="#1a1abc" fill="none"/>
<path d="M149.5 455.5 L298.5 455.5 L298.5 502.5" stroke="#1a1abc" fill="none"/>
<path d="M48.5 516.5 L48.5 568.5" stroke="#1a1abc" fill="none"/>
<path d="M48.5 560.5 L662.5 560.5" stroke="#1a1abc" fill="none"/>
<path d="M202.5 455.5 L202.5 492.5" stroke="#1a1abc" fill="none"/>
<path d="M202.5 524.5 L202.5 560.5" stroke="#1a1abc" fill="none"/>
<path d="M250.5 455.5 L250.5 464.5" stroke="#1a1abc" fill="none"/>
<path d="M250.5 504.5 L250.5 516.5" stroke="#1a1abc" fill="none"/>
<path d="M250.5 548.5 L250.5 560.5" stroke="#1a1abc" fill="none"/>
<path d="M298.5 506.5 L298.5 560.5" stroke="#1a1abc" fill="none"/>
<path d="M387.5 455.5 L476.5 455.5 L476.5 492.5" stroke="#1a1abc" fill="none"/>
<path d="M476.5 524.5 L476.5 560.5" stroke="#1a1abc" fill="none"/>
<path d="M387.5 504.5 L387.5 516.5" stroke="#1a1abc" fill="none"/>
<path d="M387.5 548.5 L387.5 560.5" stroke="#1a1abc" fill="none"/>
<path d="M428.5 455.5 L428.5 502.5" stroke="#1a1abc" fill="none"/>
<path d="M428.5 506.5 L428.5 560.5" stroke="#1a1abc" fill="none"/>
<path d="M573.5 455.5 L662.5 455.5 L662.5 492.5" stroke="#1a1abc" fill="none"/>
<path d="M662.5 524.5 L662.5 560.5" stroke="#1a1abc" fill="none"/>
<path d="M573.5 504.5 L573.5 516.5" stroke="#1a1abc" fill="none"/>
<path d="M573.5 548.5 L573.5 560.5" stroke="#1a1abc" fill="none"/>
<path d="M613.5 455.5 L613.5 502.5" stroke="#1a1abc" fill="none"/>
<path d="M613.5 506.5 L613.5 560.5" stroke="#1a1abc" fill="none"/>
<path d="M117.5 367.5 L121.5 359.5 L129.5 375.5 L137.5 359.5 L145.5 375.5 L149.5 367.5" stroke="#00005c" fill="none"/>
<path d="M117.5 407.5 L121.5 399.5 L129.5 415.5 L137.5 399.5 L145.5 415.5 L149.5 407.5" stroke="#00005c" fill="none"/>
<path d="M117.5 455.5 L121.5 447.5 L129.5 463.5 L137.5 447.5 L145.5 463.5 L149.5 455.5" stroke="#00005c" fill="none"/>
<path d="M202.5 492.5 L194.5 496.5 L210.5 504.5 L194.5 512.5 L210.5 520.5 L202.5 524.5" stroke="#00005c" fill="none"/>
<path d="M476.5 492.5 L484.5 496.5 L468.5 504.5 L484.5 512.5 L468.5 520.5 L476.5 524.5" stroke="#00005c" fill="none"/>
<path d="M662.5 492.5 L670.5 496.5 L654.5 504.5 L670.5 512.5 L654.5 520.5 L662.5 524.5" stroke="#00005c" fill="none"/>
<path d="M250.5 516.5 L258.5 520.5 L242.5 528.5 L258.5 536.5 L242.5 544.5 L250.5 548.5" stroke="#00005c" fill="none"/>
<path d="M387.5 516.5 L395.5 520.5 L379.5 528.5 L395.5 536.5 L379.5 544.5 L387.5 548.5" stroke="#00005c" fill="none"/>
<path d="M573.5 516.5 L581.5 520.5 L565.5 528.5 L581.5 536.5 L565.5 544.5 L573.5 548.5" stroke="#00005c" fill="none"/>
<path d="M250.5 464.5H246.5 Q243 464.5 243 468.5 V474.5 Q243 477.5 245.5 477.5 L253.5 477 Q256.5 478.7 253.5 480.3 L246.5 480.3 Q243 480.5 243 483.5 V487.5 Q243 489.5 245.5 489.5 L253.5 489 Q256.5 490.7 253.5 492.3 L246.5 492.3 Q243 492.5 243 495.5 V500.5 Q243 504.5 246.5 504.5 H250.5" stroke="#00005c" fill="none"/>
<path d="M387.5 464.5H383.5 Q380 464.5 380 468.5 V474.5 Q380 477.5 382.5 477.5 L390.5 477 Q393.5 478.7 390.5 480.3 L383.5 480.3 Q380 480.5 380 483.5 V487.5 Q380 489.5 382.5 489.5 L390.5 489 Q393.5 490.7 390.5 492.3 L383.5 492.3 Q380 492.5 380 495.5 V500.5 Q380 504.5 383.5 504.5 H387.5" stroke="#00005c" fill="none"/>
<path d="M573.5 464.5H569.5 Q566 464.5 566 468.5 V474.5 Q566 477.5 568.5 477.5 L576.5 477 Q579.5 478.7 576.5 480.3 L569.5 480.3 Q566 480.5 566 483.5 V487.5 Q566 489.5 568.5 489.5 L576.5 489 Q579.5 490.7 576.5 492.3 L569.5 492.3 Q566 492.5 566 495.5 V500.5 Q566 504.5 569.5 504.5 H573.5" stroke="#00005c" fill="none"/>
<path d="M290 502.5H307M290 506.5H307" stroke="#00005c" fill="none"/>
<path d="M420 502.5H437M420 506.5H437" stroke="#00005c" fill="none"/>
<path d="M605 502.5H622M605 506.5H622" stroke="#00005c" fill="none"/>
<circle cx="48.3" cy="500" r="15.5" stroke="#00005c" fill="none"/>
<path d="M44 490.5H53M48.5 486V495M44 510.5H53" stroke="#00005c" fill="none"/>
<path d="M39.5 568.5H57.5L48.5 577.5Z" stroke="#00005c" fill="none"/>
<rect x="46" y="405" width="5" height="5" fill="#0000f8"/>
<rect x="46" y="453" width="5" height="5" fill="#0000f8"/>
<rect x="46" y="558" width="5" height="5" fill="#0000f8"/>
<rect x="200" y="453" width="5" height="5" fill="#0000f8"/>
<rect x="200" y="558" width="5" height="5" fill="#0000f8"/>
<rect x="248" y="453" width="5" height="5" fill="#0000f8"/>
<rect x="248" y="558" width="5" height="5" fill="#0000f8"/>
<rect x="296" y="558" width="5" height="5" fill="#0000f8"/>
<rect x="385" y="453" width="5" height="5" fill="#0000f8"/>
<rect x="385" y="558" width="5" height="5" fill="#0000f8"/>
<rect x="426" y="453" width="5" height="5" fill="#0000f8"/>
<rect x="426" y="558" width="5" height="5" fill="#0000f8"/>
<rect x="474" y="558" width="5" height="5" fill="#0000f8"/>
<rect x="571" y="453" width="5" height="5" fill="#0000f8"/>
<rect x="571" y="558" width="5" height="5" fill="#0000f8"/>
<rect x="611" y="453" width="5" height="5" fill="#0000f8"/>
<rect x="611" y="558" width="5" height="5" fill="#0000f8"/>
<text transform="translate(122.60 356.50) scale(1.101 1)" class="sc" style="letter-spacing:0.90px">R9</text>
<text x="112.00" y="386.50" class="sc" style="letter-spacing:0.90px">25Meg</text>
<text transform="translate(122.41 396.30) scale(1.087 1)" class="sc" style="letter-spacing:0.90px">R5</text>
<text transform="translate(115.90 426.60) scale(1.021 1)" class="sc" style="letter-spacing:0.90px">9Meg</text>
<text transform="translate(122.34 444.60) scale(1.120 1)" class="sc" style="letter-spacing:0.90px">R6</text>
<text transform="translate(115.57 475.80) scale(1.032 1)" class="sc" style="letter-spacing:0.90px">1Meg</text>
<text transform="translate(13.40 516.80) scale(0.986 1)" class="sc" style="letter-spacing:-0.50px">V1</text>
<text x="9.00" y="538.00" class="sc" style="letter-spacing:0.82px">SINE(0 1 77.5k)</text>
<text transform="translate(172.72 504.50) scale(1.081 1)" class="sc" style="letter-spacing:0.90px">R2</text>
<text transform="translate(167.68 522.10) scale(1.019 1)" class="sc" style="letter-spacing:0.90px">10k</text>
<text x="261.00" y="452.60" class="sc" style="letter-spacing:0.35px">SK1</text>
<text x="254.00" y="481.60" class="sc" style="letter-spacing:0.80px">L1</text>
<text transform="translate(253.90 496.40) scale(1.098 1)" class="sc" style="letter-spacing:0.90px">220µ</text>
<text x="301.80" y="496.50" class="sc" style="letter-spacing:0.10px">C1</text>
<text transform="translate(301.63 520.00) scale(1.072 1)" class="sc" style="letter-spacing:0.90px">19n</text>
<text transform="translate(258.32 528.50) scale(1.081 1)" class="sc" style="letter-spacing:0.90px">R1</text>
<text transform="translate(259.40 546.20) scale(1.101 1)" class="sc" style="letter-spacing:0.90px">0.8</text>
<text x="427.80" y="407.60" class="sc" style="letter-spacing:0.63px">.ac dec 10k 60k 95k</text>
<text x="360.70" y="476.60" class="sc" style="letter-spacing:0.80px">L2</text>
<text x="345.80" y="496.60" class="sc" style="letter-spacing:0.90px">2.2m</text>
<text transform="translate(395.43 528.60) scale(1.074 1)" class="sc" style="letter-spacing:0.90px">R3</text>
<text transform="translate(396.94 546.20) scale(1.062 1)" class="sc" style="letter-spacing:0.90px">10</text>
<text x="438.90" y="453.00" class="sc" style="letter-spacing:0.55px">SK2</text>
<text x="431.70" y="496.30" class="sc" style="letter-spacing:0.70px">C5</text>
<text transform="translate(431.44 520.70) scale(1.064 1)" class="sc" style="letter-spacing:0.90px">1.95n</text>
<text transform="translate(484.79 504.50) scale(1.013 1)" class="sc" style="letter-spacing:0.90px">R4</text>
<text transform="translate(485.27 522.60) scale(1.031 1)" class="sc" style="letter-spacing:0.90px">100k</text>
<text transform="translate(546.89 476.50) scale(1.014 1)" class="sc" style="letter-spacing:0.90px">L3</text>
<text transform="translate(535.74 496.60) scale(1.059 1)" class="sc" style="letter-spacing:0.90px">10m</text>
<text x="624.70" y="452.60" class="sc" style="letter-spacing:0.85px">SK3</text>
<text transform="translate(581.61 528.60) scale(1.087 1)" class="sc" style="letter-spacing:0.90px">R7</text>
<text transform="translate(582.46 546.50) scale(1.120 1)" class="sc" style="letter-spacing:0.90px">55</text>
<text x="616.50" y="496.50" class="sc" style="letter-spacing:0.40px">C2</text>
<text transform="translate(617.00 521.40) scale(1.030 1)" class="sc" style="letter-spacing:0.90px">420p</text>
<text transform="translate(670.95 504.60) scale(1.054 1)" class="sc" style="letter-spacing:0.90px">R8</text>
<text x="672.00" y="522.60" class="sc" style="letter-spacing:0.83px">200k</text></g>
</svg>
</body></html>
